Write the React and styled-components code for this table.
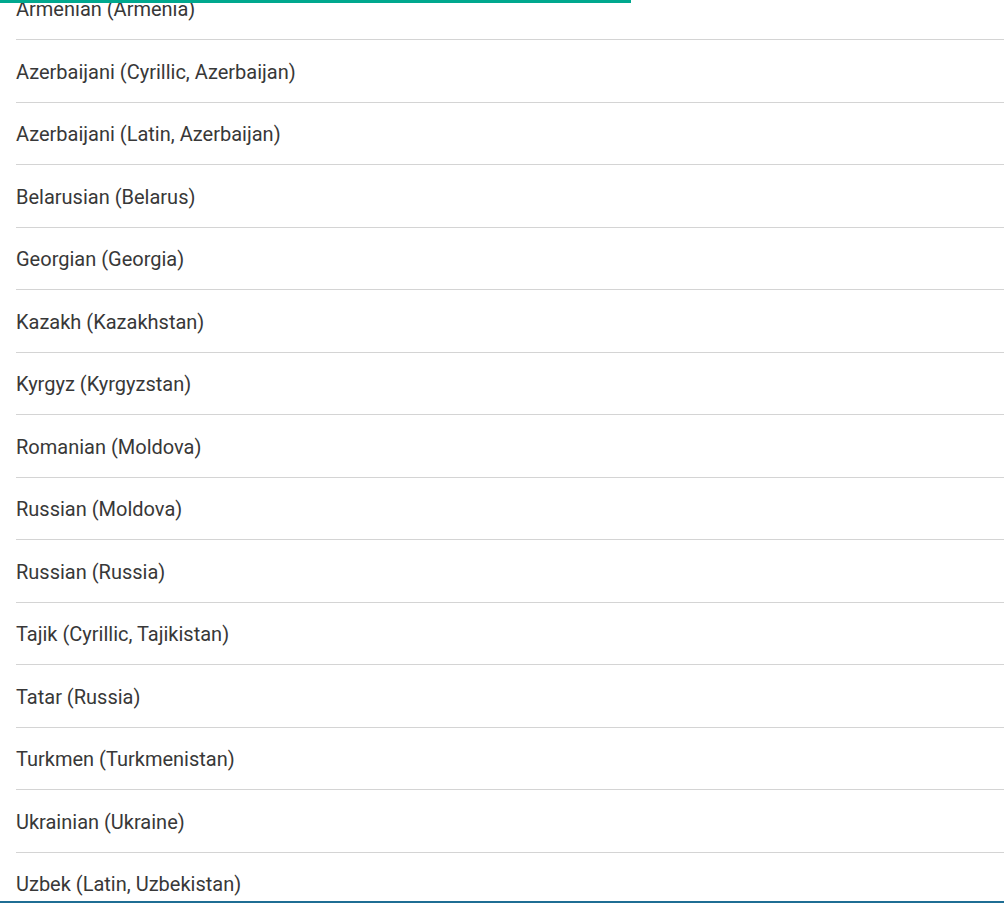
import React from "react";
import styled, { createGlobalStyle } from "styled-components";

const GlobalStyle = createGlobalStyle`
  html, body {
    margin: 0;
    padding: 0;
    background: #fff;
    overflow: hidden;
  }
  body {
    font-family: Roboto, "Liberation Sans", sans-serif;
  }
`;

const ProgressBar = styled.div`
  position: fixed;
  top: 0;
  left: 0;
  height: 3px;
  width: ${(props) => props.percent}%;
  background: #00a88e;
  z-index: 10;
`;

const BottomEdge = styled.div`
  position: fixed;
  left: 0;
  right: 0;
  bottom: 0;
  height: 2px;
  background: #1f6e94;
  z-index: 10;
`;

const Page = styled.div`
  height: 903px;
  overflow: hidden;
`;

const LanguageList = styled.ul`
  list-style: none;
  margin: -22.5px 0 0 16px;
  padding: 0;
`;

const LanguageItem = styled.li`
  display: flex;
  align-items: center;
  height: 62.5px;
  box-sizing: border-box;
  padding-top: 2px;
  border-bottom: 1px solid #d4d4d4;
  font-size: 20px;
  color: #383838;
`;

const languages = [
  "Armenian (Armenia)",
  "Azerbaijani (Cyrillic, Azerbaijan)",
  "Azerbaijani (Latin, Azerbaijan)",
  "Belarusian (Belarus)",
  "Georgian (Georgia)",
  "Kazakh (Kazakhstan)",
  "Kyrgyz (Kyrgyzstan)",
  "Romanian (Moldova)",
  "Russian (Moldova)",
  "Russian (Russia)",
  "Tajik (Cyrillic, Tajikistan)",
  "Tatar (Russia)",
  "Turkmen (Turkmenistan)",
  "Ukrainian (Ukraine)",
  "Uzbek (Latin, Uzbekistan)",
];

export default function App() {
  return (
    <>
      <GlobalStyle />
      <ProgressBar percent={62.85} />
      <Page>
        <LanguageList>
          {languages.map((lang) => (
            <LanguageItem key={lang}>{lang}</LanguageItem>
          ))}
        </LanguageList>
      </Page>
      <BottomEdge />
    </>
  );
}
